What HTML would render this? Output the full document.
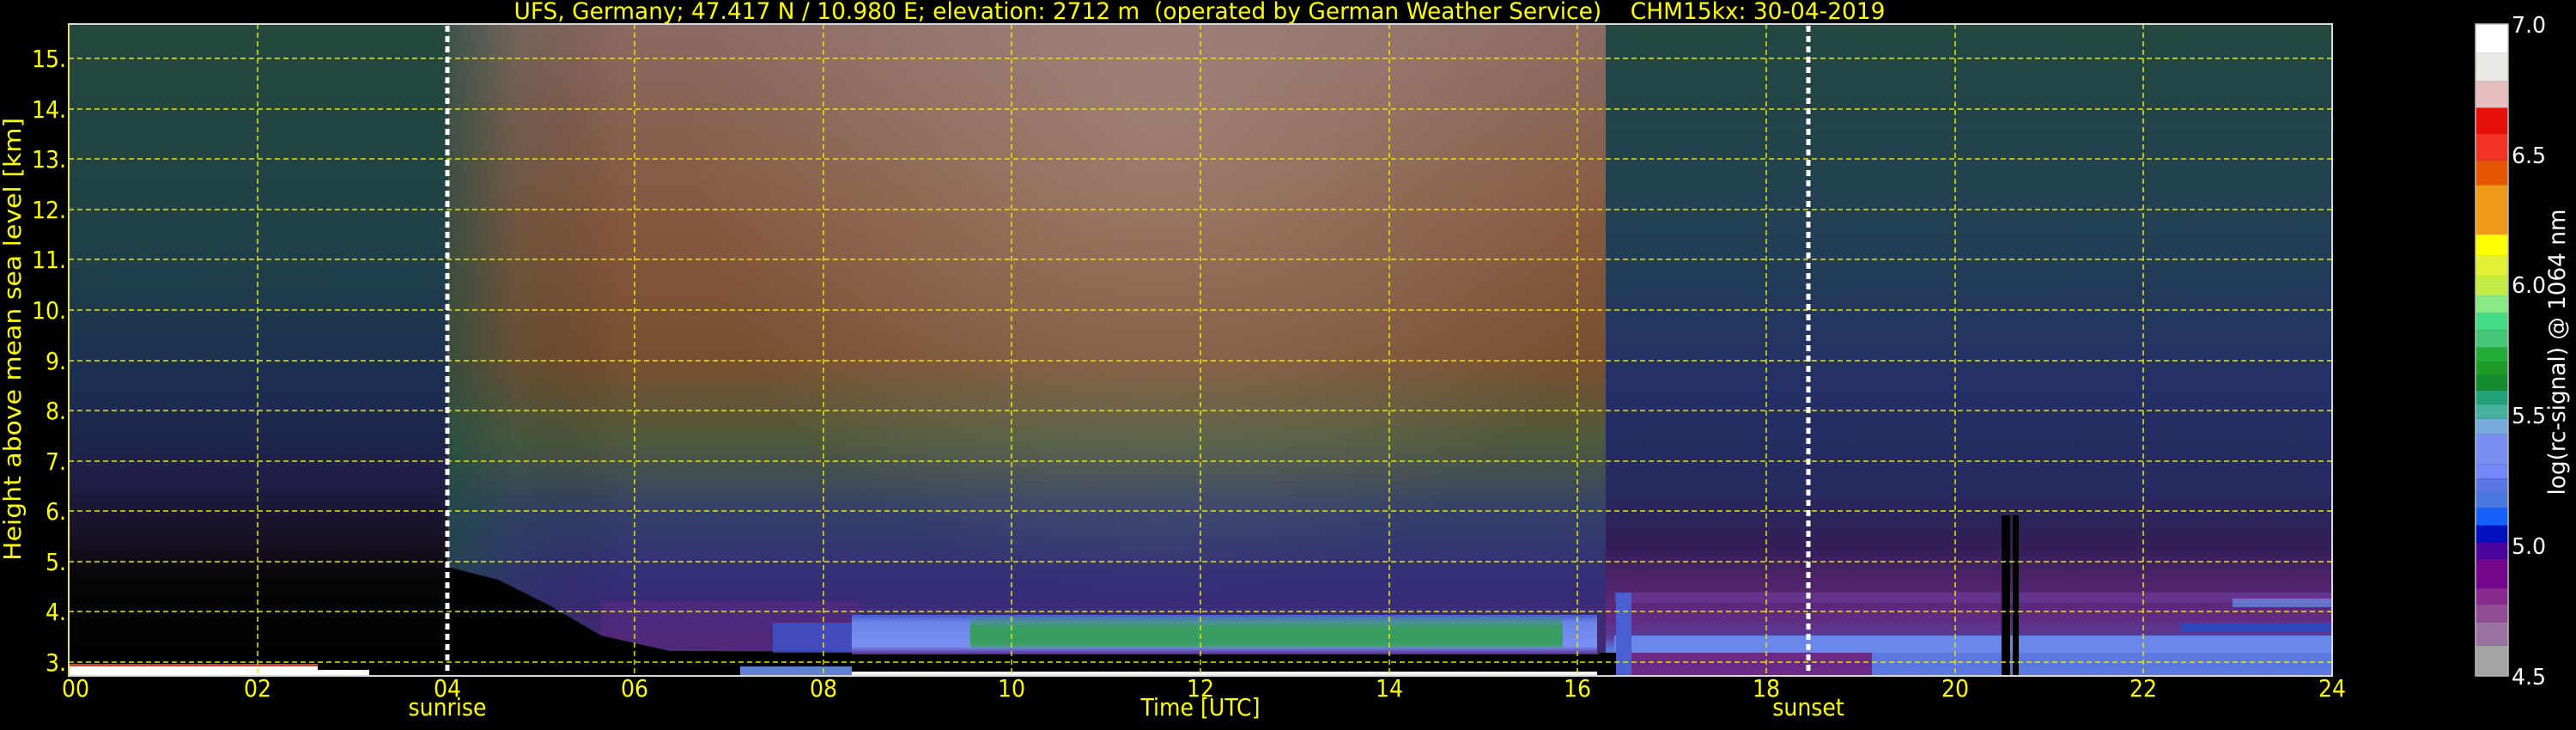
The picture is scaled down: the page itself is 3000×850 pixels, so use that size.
<!DOCTYPE html>
<html><head><meta charset="utf-8"><style>
html,body{margin:0;padding:0;background:#000;width:3000px;height:850px;overflow:hidden}
svg{display:block}
text{font-family:"DejaVu Sans Condensed","DejaVu Sans","Liberation Sans",sans-serif}
</style></head><body>
<svg width="3000" height="850" viewBox="0 0 3000 850" xmlns="http://www.w3.org/2000/svg">
<defs>
<linearGradient id="gA" x1="0" y1="28" x2="0" y2="787" gradientUnits="userSpaceOnUse">
<stop offset="0" stop-color="#24483c"/><stop offset="0.35" stop-color="#1f4048"/>
<stop offset="0.55" stop-color="#1c2e52"/><stop offset="0.7" stop-color="#1e1e46"/>
<stop offset="0.8" stop-color="#160f20"/><stop offset="0.86" stop-color="#040404"/><stop offset="1" stop-color="#000"/>
</linearGradient>
<linearGradient id="gB" x1="0" y1="28" x2="0" y2="787" gradientUnits="userSpaceOnUse">
<stop offset="0" stop-color="#8a6a62"/><stop offset="0.3" stop-color="#84583f"/>
<stop offset="0.52" stop-color="#784f30"/><stop offset="0.64" stop-color="#4e5a3c"/>
<stop offset="0.75" stop-color="#343f6a"/><stop offset="0.86" stop-color="#332d78"/>
<stop offset="0.94" stop-color="#442a74"/><stop offset="1" stop-color="#3a2a70"/>
</linearGradient>
<linearGradient id="gBh" x1="521" y1="0" x2="1870" y2="0" gradientUnits="userSpaceOnUse">
<stop offset="0" stop-color="#1e4a40" stop-opacity="0.7"/><stop offset="0.06" stop-color="#1e4a40" stop-opacity="0.2"/>
<stop offset="0.15" stop-color="#000" stop-opacity="0"/><stop offset="1" stop-color="#000" stop-opacity="0"/>
</linearGradient>
<radialGradient id="gBw" cx="1350" cy="150" r="550" gradientUnits="userSpaceOnUse">
<stop offset="0" stop-color="#c8b8b4" stop-opacity="0.35"/><stop offset="1" stop-color="#c8b8b4" stop-opacity="0"/>
</radialGradient>
<linearGradient id="gC" x1="0" y1="28" x2="0" y2="787" gradientUnits="userSpaceOnUse">
<stop offset="0" stop-color="#224840"/><stop offset="0.35" stop-color="#223e56"/>
<stop offset="0.55" stop-color="#243066"/><stop offset="0.72" stop-color="#262a60"/>
<stop offset="0.8" stop-color="#321f56"/><stop offset="0.86" stop-color="#50246c"/>
<stop offset="0.91" stop-color="#622a80"/><stop offset="0.94" stop-color="#5a3a98"/>
<stop offset="0.96" stop-color="#5a78e0"/><stop offset="1" stop-color="#5a70d8"/>
</linearGradient>
<linearGradient id="gBL" x1="0" y1="716" x2="0" y2="762" gradientUnits="userSpaceOnUse">
<stop offset="0" stop-color="#4a5ad0"/><stop offset="0.2" stop-color="#6a86e8"/>
<stop offset="0.8" stop-color="#7a90f0"/><stop offset="1" stop-color="#5a2a90"/>
</linearGradient>
<linearGradient id="gG" x1="0" y1="718" x2="0" y2="756" gradientUnits="userSpaceOnUse">
<stop offset="0" stop-color="#30a048" stop-opacity="0.2"/><stop offset="0.35" stop-color="#2ea048" stop-opacity="0.85"/>
<stop offset="0.85" stop-color="#2ea048" stop-opacity="0.85"/><stop offset="1" stop-color="#2ea048" stop-opacity="0"/>
</linearGradient>
</defs>

<rect x="80" y="28" width="441" height="759" fill="url(#gA)"/>
<rect x="521" y="28" width="1349" height="759" fill="url(#gB)"/>
<rect x="521" y="28" width="1349" height="759" fill="url(#gBh)"/>
<rect x="521" y="28" width="1349" height="700" fill="url(#gBw)"/>
<rect x="1870" y="28" width="846" height="759" fill="url(#gC)"/>
<rect x="700" y="700" width="300" height="60" fill="#5a2a80" opacity="0.6"/>
<polygon points="521,787 521,660 580,675 640,705 700,740 780,758 1870,762 1870,787" fill="#000"/>
<rect x="992" y="716" width="868" height="46" fill="url(#gBL)"/>
<rect x="900" y="725" width="92" height="35" fill="#3a5ad8" opacity="0.7"/>
<rect x="1130" y="718" width="690" height="38" fill="url(#gG)"/>
<rect x="80" y="776" width="290" height="11" fill="#fff"/>
<rect x="80" y="773" width="290" height="3" fill="#d84020"/>
<rect x="370" y="780" width="60" height="7" fill="#fff"/>
<rect x="862" y="776" width="130" height="10" fill="#6080d0"/>
<rect x="992" y="782" width="868" height="5" fill="#f4f4f4"/>
<rect x="1880" y="690" width="836" height="12" fill="#6a3a98" opacity="0.7"/>
<rect x="1880" y="740" width="836" height="20" fill="#6a88ea"/>
<rect x="1880" y="760" width="300" height="27" fill="#6a2a86"/>
<rect x="2180" y="760" width="536" height="27" fill="#5a78e0"/>
<rect x="2540" y="725" width="176" height="10" fill="#2050d0" opacity="0.7"/>
<rect x="2600" y="697" width="116" height="10" fill="#6a90e8" opacity="0.7"/>
<rect x="1882" y="690" width="18" height="97" fill="#4a60d0"/>
<rect x="2331" y="600" width="10" height="187" fill="#000"/>
<rect x="2344" y="600" width="7" height="187" fill="#000"/>
<rect x="1862" y="760" width="20" height="27" fill="#000"/>

<g stroke="#e8e800" stroke-width="1.5" stroke-dasharray="6,4" fill="none">
<line x1="80" y1="68" x2="2716" y2="68"/><line x1="80" y1="127" x2="2716" y2="127"/>
<line x1="80" y1="185" x2="2716" y2="185"/><line x1="80" y1="244" x2="2716" y2="244"/>
<line x1="80" y1="302" x2="2716" y2="302"/><line x1="80" y1="361" x2="2716" y2="361"/>
<line x1="80" y1="420" x2="2716" y2="420"/><line x1="80" y1="478" x2="2716" y2="478"/>
<line x1="80" y1="537" x2="2716" y2="537"/><line x1="80" y1="595" x2="2716" y2="595"/>
<line x1="80" y1="654" x2="2716" y2="654"/><line x1="80" y1="712" x2="2716" y2="712"/>
<line x1="80" y1="771" x2="2716" y2="771"/>
<line x1="300" y1="28" x2="300" y2="787"/><line x1="739" y1="28" x2="739" y2="787"/>
<line x1="959" y1="28" x2="959" y2="787"/><line x1="1178" y1="28" x2="1178" y2="787"/>
<line x1="1398" y1="28" x2="1398" y2="787"/><line x1="1618" y1="28" x2="1618" y2="787"/>
<line x1="1837" y1="28" x2="1837" y2="787"/><line x1="2057" y1="28" x2="2057" y2="787"/>
<line x1="2277" y1="28" x2="2277" y2="787"/><line x1="2496" y1="28" x2="2496" y2="787"/>
</g>
<g stroke="#fff" stroke-width="5" stroke-dasharray="7,5">
<line x1="521" y1="30" x2="521" y2="787"/><line x1="2106" y1="30" x2="2106" y2="787"/>
</g>
<rect x="80" y="28" width="2636" height="759" fill="none" stroke="#d8d8d8" stroke-width="2"/>
<line x1="80" y1="28" x2="80" y2="787" stroke="#e0e070" stroke-width="2"/>

<text x="1397" y="22" fill="#ffff00" font-size="27" text-anchor="middle" textLength="1597" lengthAdjust="spacingAndGlyphs" xml:space="preserve">UFS, Germany; 47.417 N / 10.980 E; elevation: 2712 m  (operated by German Weather Service)    CHM15kx: 30-04-2019</text>

<g fill="#ffff00" font-size="28" text-anchor="end">
<text x="77" y="78">15.</text><text x="77" y="137">14.</text><text x="77" y="195">13.</text>
<text x="77" y="254">12.</text><text x="77" y="312">11.</text><text x="77" y="371">10.</text>
<text x="77" y="430">9.</text><text x="77" y="488">8.</text><text x="77" y="547">7.</text>
<text x="77" y="605">6.</text><text x="77" y="664">5.</text><text x="77" y="722">4.</text>
<text x="77" y="781">3.</text>
</g>
<text transform="translate(24,395) rotate(-90)" fill="#ffff00" font-size="28" text-anchor="middle" textLength="516" lengthAdjust="spacingAndGlyphs">Height above mean sea level [km]</text>

<g fill="#ffff00" font-size="28" text-anchor="middle">
<text x="88" y="811">00</text><text x="300" y="811">02</text><text x="521" y="811">04</text>
<text x="739" y="811">06</text><text x="959" y="811">08</text><text x="1178" y="811">10</text>
<text x="1398" y="811">12</text><text x="1618" y="811">14</text><text x="1837" y="811">16</text>
<text x="2057" y="811">18</text><text x="2277" y="811">20</text><text x="2496" y="811">22</text>
<text x="2716" y="811">24</text>
<text x="521" y="833">sunrise</text><text x="2106" y="833">sunset</text>
<text x="1398" y="833">Time [UTC]</text>
</g>

<svg x="2883" y="28" width="38" height="759" viewBox="0 52 1 1400" preserveAspectRatio="none">
<rect x="0" y="52" width="1" height="62" fill="#ffffff"/>
<rect x="0" y="114" width="1" height="61" fill="#ebe9e4"/>
<rect x="0" y="175" width="1" height="57" fill="#e8bfc0"/>
<rect x="0" y="232" width="1" height="56" fill="#e60f0a"/>
<rect x="0" y="288" width="1" height="57" fill="#f03322"/>
<rect x="0" y="345" width="1" height="53" fill="#e65605"/>
<rect x="0" y="398" width="1" height="106" fill="#f09a1a"/>
<rect x="0" y="504" width="1" height="45" fill="#ffff00"/>
<rect x="0" y="549" width="1" height="45" fill="#e4f036"/>
<rect x="0" y="594" width="1" height="41" fill="#c4ec44"/>
<rect x="0" y="635" width="1" height="38" fill="#88ea84"/>
<rect x="0" y="673" width="1" height="37" fill="#44dc88"/>
<rect x="0" y="710" width="1" height="37" fill="#44c878"/>
<rect x="0" y="747" width="1" height="30" fill="#20ae38"/>
<rect x="0" y="777" width="1" height="29" fill="#1e9c28"/>
<rect x="0" y="806" width="1" height="33" fill="#128c2c"/>
<rect x="0" y="839" width="1" height="30" fill="#22a47a"/>
<rect x="0" y="869" width="1" height="31" fill="#46b09e"/>
<rect x="0" y="900" width="1" height="33" fill="#78acdc"/>
<rect x="0" y="933" width="1" height="65" fill="#7a8ef2"/>
<rect x="0" y="998" width="1" height="30" fill="#7486f8"/>
<rect x="0" y="1028" width="1" height="31" fill="#5a76e0"/>
<rect x="0" y="1059" width="1" height="33" fill="#4a76e0"/>
<rect x="0" y="1092" width="1" height="37" fill="#1660fa"/>
<rect x="0" y="1129" width="1" height="37" fill="#0212c0"/>
<rect x="0" y="1166" width="1" height="35" fill="#4c06a0"/>
<rect x="0" y="1201" width="1" height="63" fill="#74068c"/>
<rect x="0" y="1264" width="1" height="35" fill="#882a8e"/>
<rect x="0" y="1299" width="1" height="38" fill="#924c96"/>
<rect x="0" y="1337" width="1" height="50" fill="#9a74a0"/>
<rect x="0" y="1387" width="1" height="65" fill="#a4a4a4"/>
</svg>
<rect x="2883" y="28" width="38" height="759" fill="none" stroke="#bbb" stroke-width="1.5"/>
<g fill="#fff" font-size="26">
<text x="2925" y="38" textLength="40" lengthAdjust="spacingAndGlyphs">7.0</text>
<text x="2925" y="190" textLength="40" lengthAdjust="spacingAndGlyphs">6.5</text>
<text x="2925" y="341" textLength="40" lengthAdjust="spacingAndGlyphs">6.0</text>
<text x="2925" y="493" textLength="40" lengthAdjust="spacingAndGlyphs">5.5</text>
<text x="2925" y="645" textLength="40" lengthAdjust="spacingAndGlyphs">5.0</text>
<text x="2925" y="797" textLength="40" lengthAdjust="spacingAndGlyphs">4.5</text>
</g>
<text transform="translate(2987,410) rotate(-90)" fill="#fff" font-size="27" text-anchor="middle" textLength="333" lengthAdjust="spacingAndGlyphs">log(rc-signal) @ 1064 nm</text>
</svg>
</body></html>
